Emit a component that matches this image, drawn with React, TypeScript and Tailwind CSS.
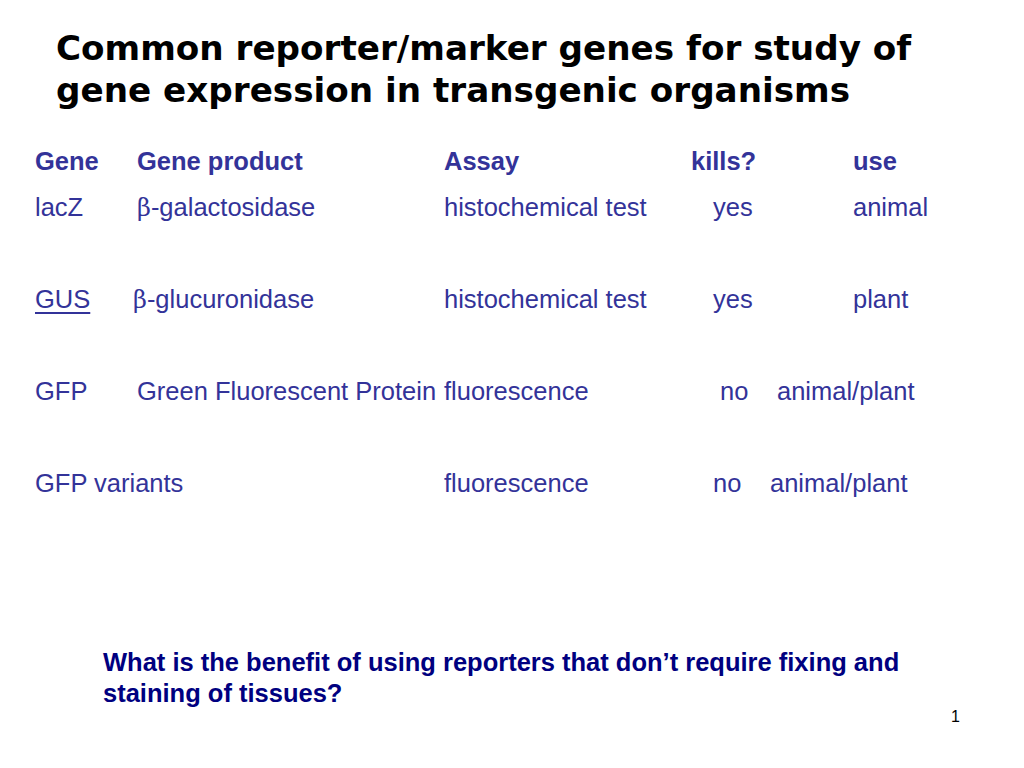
import React from "react";

const arial = { fontFamily: '"Liberation Sans", Arial, sans-serif' };

function Beta() {
  return <span style={{ fontFamily: '"DejaVu Serif", "Liberation Serif", serif' }} className="text-[24px]">β</span>;
}

export default function App() {
  return (
    <div className="w-[1024px] h-[768px] bg-white flex flex-col overflow-hidden">
      <div
        className="pt-[27px] pl-[56px] text-[34.2px] leading-[42px] font-bold text-black"
        style={{ fontFamily: '"DejaVu Sans", Verdana, sans-serif' }}
      >
        <div>Common reporter/marker genes for study of</div>
        <div>gene expression in transgenic organisms</div>
      </div>

      <div className="mt-[35px] text-[25.5px] leading-[30px] text-[#333399]" style={arial}>
        <div className="flex h-[30px] font-bold pl-[35px]">
          <div className="w-[102px]">Gene</div>
          <div className="w-[307px]">Gene product</div>
          <div className="w-[247px]">Assay</div>
          <div className="w-[162px]">kills?</div>
          <div>use</div>
        </div>
        <div className="flex h-[30px] mt-[16px] pl-[35px]">
          <div className="w-[102px]">lacZ</div>
          <div className="w-[307px]"><Beta />-galactosidase</div>
          <div className="w-[269px]">histochemical test</div>
          <div className="w-[140px]">yes</div>
          <div>animal</div>
        </div>
        <div className="flex h-[30px] mt-[62px] pl-[35px]">
          <div className="w-[98px]"><span className="underline underline-offset-[4px] decoration-[1.5px]">GUS</span></div>
          <div className="w-[311px]"><Beta />-glucuronidase</div>
          <div className="w-[269px]">histochemical test</div>
          <div className="w-[140px]">yes</div>
          <div>plant</div>
        </div>
        <div className="flex h-[30px] mt-[62px] pl-[35px]">
          <div className="w-[102px]">GFP</div>
          <div className="w-[307px]">Green Fluorescent Protein</div>
          <div className="w-[276px]">fluorescence</div>
          <div className="w-[57px]">no</div>
          <div>animal/plant</div>
        </div>
        <div className="flex h-[30px] mt-[62px] pl-[35px]">
          <div className="w-[409px]">GFP variants</div>
          <div className="w-[269px]">fluorescence</div>
          <div className="w-[57px]">no</div>
          <div>animal/plant</div>
        </div>
      </div>

      <div
        className="mt-[149px] pl-[103px] text-[25.5px] leading-[31px] font-bold text-[#000080]"
        style={arial}
      >
        <div>What is the benefit of using reporters that don’t require fixing and</div>
        <div>staining of tissues?</div>
      </div>
      <div className="-mt-[2px] pr-[64px] text-right text-[16px] leading-[20px] text-black" style={arial}>
        1
      </div>
    </div>
  );
}
